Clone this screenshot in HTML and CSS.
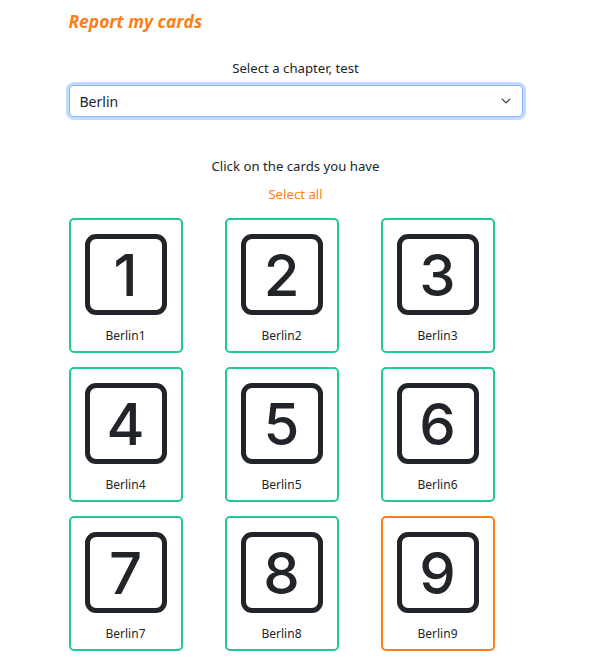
FILE: index.html
```html
<!DOCTYPE html>
<html>
<head>
<meta charset="utf-8">
<link rel="stylesheet" href="styles.css">
</head>
<body>
<div class="container">
  <h1 class="title">Report my cards</h1>
  <div class="field">
    <label class="field-label" for="chapter">Select a chapter, test</label>
    <select id="chapter" class="select"><option>Berlin</option></select>
  </div>
  <p class="hint">Click on the cards you have</p>
  <a class="select-all">Select all</a>
  <div class="grid">
    <div class="card"><div class="num">1</div><div class="name">Berlin1</div></div>
    <div class="card"><div class="num">2</div><div class="name">Berlin2</div></div>
    <div class="card"><div class="num">3</div><div class="name">Berlin3</div></div>
    <div class="card"><div class="num">4</div><div class="name">Berlin4</div></div>
    <div class="card"><div class="num">5</div><div class="name">Berlin5</div></div>
    <div class="card"><div class="num">6</div><div class="name">Berlin6</div></div>
    <div class="card"><div class="num">7</div><div class="name">Berlin7</div></div>
    <div class="card"><div class="num">8</div><div class="name">Berlin8</div></div>
    <div class="card missing"><div class="num">9</div><div class="name">Berlin9</div></div>
  </div>
</div>
</body>
</html>
```

FILE: styles.css
```css
html, body {
  margin: 0;
  padding: 0;
  background: #fff;
}
body {
  font-family: "Noto Sans", "Open Sans", sans-serif;
  color: #212529;
  font-size: 13.2px;
}
.container {
  width: 454px;
  margin: 0 auto;
  padding-top: 10px;
}
.title {
  margin: 0;
  font-family: "Open Sans", sans-serif;
  font-weight: 700;
  font-style: italic;
  font-size: 17.4px;
  line-height: 22px;
  color: #fd7e14;
}
.field {
  display: flex;
  flex-direction: column;
  align-items: center;
  margin-top: 26px;
}
.field-label {
  line-height: 20px;
  margin-bottom: 7px;
}
.select {
  appearance: none;
  -webkit-appearance: none;
  width: 100%;
  height: 32px;
  box-sizing: border-box;
  border: 1px solid #86b7fe;
  border-radius: 5px;
  box-shadow: 0 0 0 3px rgba(13, 110, 253, 0.25);
  padding: 0 30px 0 10px;
  font-family: "Noto Sans", sans-serif;
  font-size: 14px;
  color: #212529;
  background: #fff url("data:image/svg+xml,%3csvg xmlns='http://www.w3.org/2000/svg' viewBox='0 0 16 16'%3e%3cpath fill='none' stroke='%23343a40' stroke-linecap='round' stroke-linejoin='round' stroke-width='2' d='m2 5 6 6 6-6'/%3e%3c/svg%3e") no-repeat right 10px center / 12px 10px;
  outline: none;
}
.hint {
  margin: 39px 0 0;
  text-align: center;
  line-height: 20px;
}
.select-all {
  display: block;
  text-align: center;
  margin-top: 8px;
  line-height: 20px;
  color: #fd7e14;
}
.grid {
  display: grid;
  grid-template-columns: repeat(3, 114px);
  column-gap: 42px;
  row-gap: 14px;
  margin-top: 14px;
}
.card {
  box-sizing: border-box;
  height: 135px;
  border: 2px solid #20c997;
  border-radius: 5px;
  display: flex;
  flex-direction: column;
  align-items: center;
  padding-top: 14px;
}
.card.missing {
  border-color: #fd7e14;
}
.num {
  box-sizing: border-box;
  width: 82px;
  height: 81px;
  border: 5px solid #212529;
  border-radius: 11px;
  display: flex;
  align-items: center;
  justify-content: center;
  font-family: "Inter", "Roboto", sans-serif;
  font-weight: 500;
  font-size: 58px;
  line-height: 1;
  color: #212529;
}
.name {
  margin-top: 13px;
  font-size: 12px;
  line-height: 16px;
}
```
